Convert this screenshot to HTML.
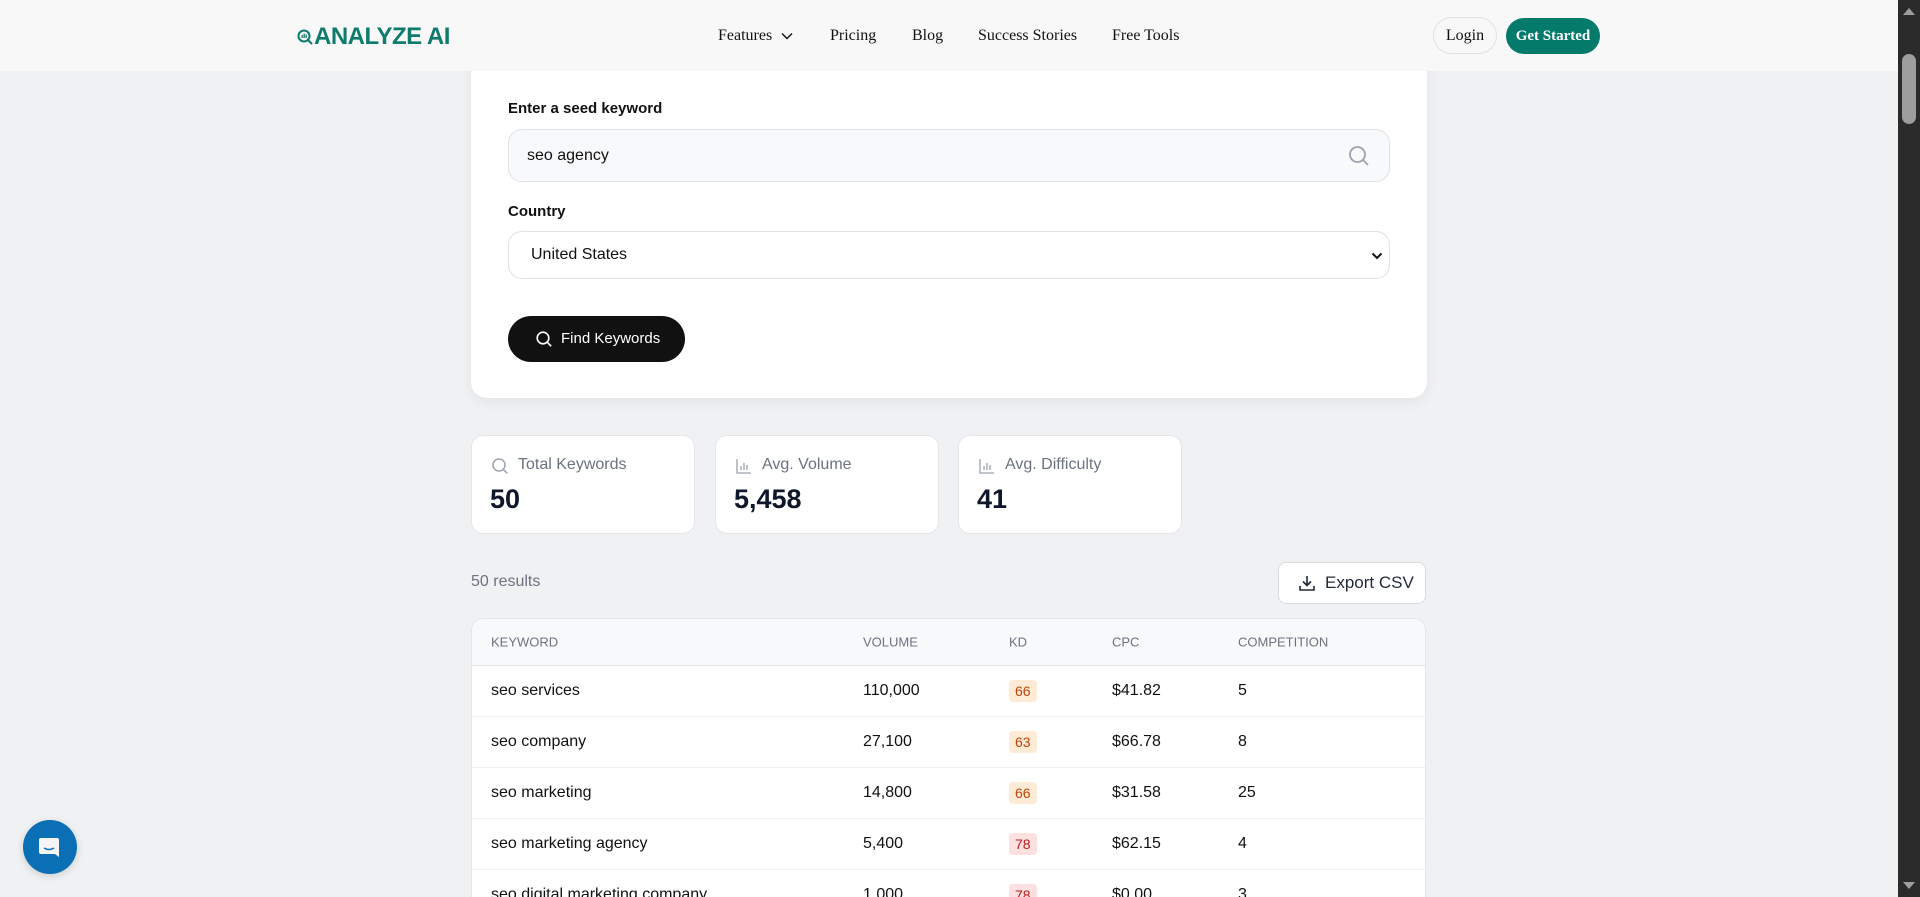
<!DOCTYPE html>
<html style="height:897px;overflow:hidden"><head><meta charset="utf-8"><style>
*{box-sizing:border-box;margin:0;padding:0}
body{width:1920px;height:897px;overflow:hidden;background:#f0f1f3;font-family:"Liberation Sans",sans-serif;position:relative;color:#111}
.hdr{position:absolute;left:0;top:0;width:1898px;height:71px;background:#f8f8f8;z-index:2}
.logo{position:absolute;left:297px;top:23px;font-size:24px;font-weight:bold;color:#0f7b6c;letter-spacing:-0.5px}
.nav{position:absolute;top:27px;font-family:"Liberation Serif",serif;font-size:16px;color:#111}
.btn-l{position:absolute;left:1433px;top:17px;width:64px;height:37px;border:1px solid #e2e2e2;border-radius:19px;font-family:"Liberation Serif",serif;font-size:16px;text-align:center;line-height:35px;background:#f8f8f8}
.btn-g{position:absolute;left:1506px;top:18px;width:94px;height:36px;border-radius:18px;background:#037a6a;color:#fff;font-family:"Liberation Serif",serif;font-weight:bold;font-size:15px;text-align:center;line-height:36px}
.sb{position:absolute;left:1898px;top:0;width:22px;height:897px;background:#2b2b2b;z-index:3}
.card{position:absolute;left:471px;top:50px;width:956px;height:348px;background:#fff;border-radius:16px;box-shadow:0 4px 14px rgba(0,0,0,.06)}
.lbl{position:absolute;left:37px;font-size:15px;font-weight:bold;color:#111}
.inp{position:absolute;left:37px;width:882px;border:1px solid #dfe1e5;border-radius:14px;font-size:16px}
.fk{position:absolute;left:37px;top:266px;width:177px;height:46px;border-radius:23px;background:#111;color:#fff;font-size:15px;line-height:46px;padding-left:53px}
.st{position:absolute;top:435px;width:224px;height:99px;background:#fff;border:1px solid #e4e6ea;border-radius:12px}
.st .t{position:absolute;left:46px;top:20px;font-size:16px;color:#6b7280}
.st .v{position:absolute;left:18px;top:48px;font-size:27px;font-weight:bold;color:#0f172a}
.st svg{position:absolute;left:19px;top:21px}
.tbl{position:absolute;left:471px;top:618px;width:955px;height:279px;background:#fff;border:1px solid #e4e6ea;border-bottom:0;border-radius:12px 12px 0 0;overflow:hidden}
.th{height:47px;background:#f8f9fb;border-bottom:1px solid #e4e6ea;position:relative;font-size:13px;color:#6b7280}
.row{height:51px;border-bottom:1px solid #eceef1;position:relative;font-size:16px;color:#111}
.th span,.row span{position:absolute;top:50%;transform:translateY(-50%)}
.kd{padding:3px 6px;border-radius:4px;font-size:14px}
.o{background:#fdebd5;color:#c2410c}.r{background:#fde0e0;color:#b91c1c}
</style></head><body>
<div class="hdr">
<div class="logo"><svg width="16" height="16" viewBox="0 0 16 16" style="vertical-align:-1px;margin-right:1px"><circle cx="7" cy="7" r="5.5" fill="none" stroke="#0f7b6c" stroke-width="2"/><path d="M11 11l4 4" stroke="#0f7b6c" stroke-width="2"/><rect x="4.5" y="6" width="1.3" height="3" fill="#0f7b6c"/><rect x="6.5" y="4.5" width="1.3" height="4.5" fill="#0f7b6c"/><rect x="8.5" y="5.5" width="1.3" height="3.5" fill="#0f7b6c"/></svg>ANALYZE AI</div>
<div class="nav" style="left:718px">Features <svg width="12" height="8" viewBox="0 0 12 8" style="margin-left:5px"><path d="M1 1.5l5 5 5-5" fill="none" stroke="#111" stroke-width="1.4"/></svg></div>
<div class="nav" style="left:830px">Pricing</div>
<div class="nav" style="left:912px">Blog</div>
<div class="nav" style="left:978px">Success Stories</div>
<div class="nav" style="left:1112px">Free Tools</div>
<div class="btn-l">Login</div>
<div class="btn-g">Get Started</div>
</div>
<div class="sb"><div style="position:absolute;left:4px;top:54px;width:14px;height:70px;background:#9e9e9e;border-radius:7px"></div>
<div style="position:absolute;left:5px;top:8px;border:6px solid transparent;border-bottom:7px solid #9e9e9e;border-top:0"></div>
<div style="position:absolute;left:5px;top:882px;border:6px solid transparent;border-top:7px solid #9e9e9e;border-bottom:0"></div></div>

<div class="card">
<div class="lbl" style="top:50px">Enter a seed keyword</div>
<div class="inp" style="top:79px;height:53px;background:#f8f9fb;line-height:51px;padding-left:18px">seo agency
<svg width="24" height="24" viewBox="0 0 24 24" style="position:absolute;right:18px;top:14px"><circle cx="10.5" cy="10.5" r="7.5" fill="none" stroke="#9ca3af" stroke-width="1.8"/><path d="M16 16l5 5" stroke="#9ca3af" stroke-width="1.8"/></svg></div>
<div class="lbl" style="top:153px">Country</div>
<div class="inp" style="top:181px;height:48px;background:#fff;line-height:46px;padding-left:22px">United States
<svg width="12" height="8" viewBox="0 0 12 8" style="position:absolute;right:6px;top:20px"><path d="M1.5 1.5l4.5 4.5 4.5-4.5" fill="none" stroke="#111" stroke-width="2"/></svg></div>
<div class="fk"><svg width="18" height="18" viewBox="0 0 18 18" style="position:absolute;left:27px;top:14px"><circle cx="8" cy="8" r="5.8" fill="none" stroke="#fff" stroke-width="1.6"/><path d="M12.2 12.2l4 4" stroke="#fff" stroke-width="1.6"/></svg>Find Keywords</div>
</div>

<div class="st" style="left:471px"><svg width="18" height="18" viewBox="0 0 18 18"><circle cx="8" cy="8" r="6" fill="none" stroke="#9ca3af" stroke-width="1.5"/><path d="M12.3 12.3l4 4" stroke="#9ca3af" stroke-width="1.5"/></svg><div class="t">Total Keywords</div><div class="v">50</div></div>
<div class="st" style="left:715px"><svg width="18" height="18" viewBox="0 0 18 18"><path d="M2 2v14h14M6 13V9M9 13V6M12 13V8" fill="none" stroke="#9ca3af" stroke-width="1.3"/></svg><div class="t">Avg. Volume</div><div class="v">5,458</div></div>
<div class="st" style="left:958px"><svg width="18" height="18" viewBox="0 0 18 18"><path d="M2 2v14h14M6 13V9M9 13V6M12 13V8" fill="none" stroke="#9ca3af" stroke-width="1.3"/></svg><div class="t">Avg. Difficulty</div><div class="v">41</div></div>

<div style="position:absolute;left:471px;top:573px;font-size:16px;color:#6b7280">50 results</div>
<div style="position:absolute;left:1278px;top:562px;width:148px;height:42px;background:#fff;border:1px solid #d8dbe0;border-radius:8px;font-size:17px;color:#1f2937;line-height:40px;padding-left:46px">
<svg width="18" height="18" viewBox="0 0 18 18" style="position:absolute;left:19px;top:11px"><path d="M9 2v9M5 7.5l4 4 4-4M2 12v4h14v-4" fill="none" stroke="#1f2937" stroke-width="1.6"/></svg>Export CSV</div>

<div class="tbl">
<div class="th"><span style="left:19px">KEYWORD</span><span style="left:391px">VOLUME</span><span style="left:537px">KD</span><span style="left:640px">CPC</span><span style="left:766px">COMPETITION</span></div>
<div class="row"><span style="left:19px">seo services</span><span style="left:391px">110,000</span><span style="left:537px" class="kd o">66</span><span style="left:640px">$41.82</span><span style="left:766px">5</span></div>
<div class="row"><span style="left:19px">seo company</span><span style="left:391px">27,100</span><span style="left:537px" class="kd o">63</span><span style="left:640px">$66.78</span><span style="left:766px">8</span></div>
<div class="row"><span style="left:19px">seo marketing</span><span style="left:391px">14,800</span><span style="left:537px" class="kd o">66</span><span style="left:640px">$31.58</span><span style="left:766px">25</span></div>
<div class="row"><span style="left:19px">seo marketing agency</span><span style="left:391px">5,400</span><span style="left:537px" class="kd r">78</span><span style="left:640px">$62.15</span><span style="left:766px">4</span></div>
<div class="row"><span style="left:19px">seo digital marketing company</span><span style="left:391px">1,000</span><span style="left:537px" class="kd r">78</span><span style="left:640px">$0.00</span><span style="left:766px">3</span></div>
</div>

<div style="position:absolute;left:23px;top:820px;width:54px;height:54px;border-radius:50%;background:#0a6fb4;box-shadow:0 2px 8px rgba(0,0,0,.15)">
<svg width="24" height="24" viewBox="0 0 24 24" style="position:absolute;left:15px;top:15px"><path d="M3 3h16a2 2 0 0 1 2 2v17l-4-3H3a2 2 0 0 1-2-2V5a2 2 0 0 1 2-2z" fill="#f5f5f5"/><path d="M6 13q5 3 10 0" fill="none" stroke="#0a6fb4" stroke-width="1.6"/></svg></div>
</body></html>
